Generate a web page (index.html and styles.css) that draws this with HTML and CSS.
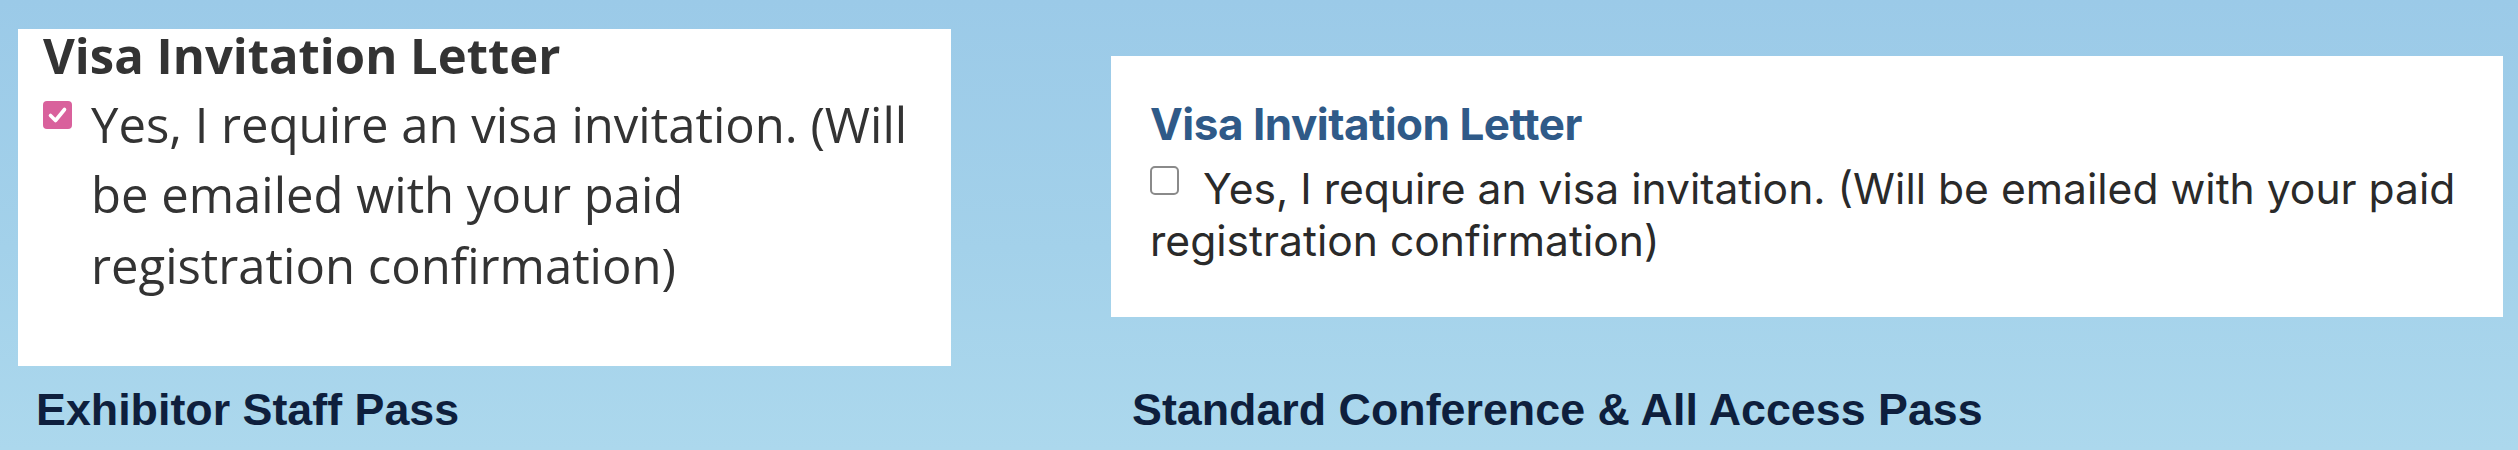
FILE: index.html
```html
<!DOCTYPE html>
<html lang="en">
<head>
<meta charset="utf-8">
<title>Visa Invitation Letter</title>
<link rel="stylesheet" href="styles.css">
</head>
<body>
<main class="board">
  <div class="card card-left">
    <h2 class="title title-left">Visa Invitation Letter</h2>
    <label class="opt opt-left">
      <span class="box box-checked">
        <svg viewBox="0 0 29 28" width="29" height="28" aria-hidden="true"><path d="M7.5 14.5 L12.5 19.5 L21.5 8.5" fill="none" stroke="#fff" stroke-width="3.6" stroke-linecap="round" stroke-linejoin="round"/></svg>
      </span>
      <span class="opt-text">Yes, I require an visa invitation. (Will be emailed with your paid registration confirmation)</span>
    </label>
  </div>
  <div class="card card-right">
    <h2 class="title title-right">Visa Invitation Letter</h2>
    <p class="opt-right"><span class="box box-empty"></span>Yes, I require an visa invitation. (Will be emailed with your paid registration confirmation)</p>
  </div>
  <p class="caption caption-left">Exhibitor Staff Pass</p>
  <p class="caption caption-right">Standard Conference &amp; All Access Pass</p>
</main>
</body>
</html>
```
FILE: styles.css
```css
html, body {
  margin: 0;
  padding: 0;
}
body {
  width: 2518px;
  height: 450px;
  overflow: hidden;
  background: linear-gradient(180deg, #9bcae8 0%, #a3d1ea 55%, #acd8ed 100%);
}
.board {
  display: grid;
  grid-template-columns: 933px 1392px;
  grid-template-rows: 337px auto;
  column-gap: 160px;
  row-gap: 18px;
  padding: 29px 15px 0 18px;
  align-items: start;
}
.card {
  background: #fff;
  box-sizing: border-box;
}
.card-left {
  height: 337px;
  padding: 0 16px 0 25px;
}
.card-right {
  height: 261px;
  margin-top: 27px;
  padding: 44px 24px 0 39px;
}
.title {
  margin: 0;
}
.title-left {
  font-family: "Open Sans", sans-serif;
  font-weight: 700;
  font-size: 49px;
  line-height: 1.1;
  color: #333333;
}
.opt-left {
  display: flex;
  align-items: flex-start;
  margin-top: 5.8px;
  font-family: "Open Sans", sans-serif;
  font-size: 49px;
  line-height: 70.5px;
  color: #333333;
}
.box {
  display: inline-block;
  box-sizing: border-box;
  flex: none;
}
.box-checked {
  width: 29px;
  height: 28px;
  margin-top: 12.3px;
  margin-right: 19px;
  border-radius: 4px;
  background: #d9619c;
}
.box-checked svg {
  display: block;
}
.title-right {
  font-family: Inter, sans-serif;
  font-weight: 700;
  font-size: 44px;
  line-height: 48px;
  letter-spacing: -0.5px;
  color: #2f5a88;
}
.opt-right {
  margin: 14.5px 0 0;
  font-family: Inter, sans-serif;
  font-size: 42.6px;
  line-height: 52px;
  color: #2a2a2a;
}
.box-empty {
  width: 29px;
  height: 29px;
  margin-right: 24px;
  border: 2.5px solid #8a8a8a;
  border-radius: 5px;
  vertical-align: 9px;
  background: #fff;
}
.caption {
  margin: 0;
  font-family: "Liberation Sans", Arial, sans-serif;
  font-weight: 700;
  font-size: 44.8px;
  line-height: 51px;
  color: #0e1f3d;
}
.caption-left {
  padding-left: 18px;
}
.caption-right {
  padding-left: 21px;
}
```
